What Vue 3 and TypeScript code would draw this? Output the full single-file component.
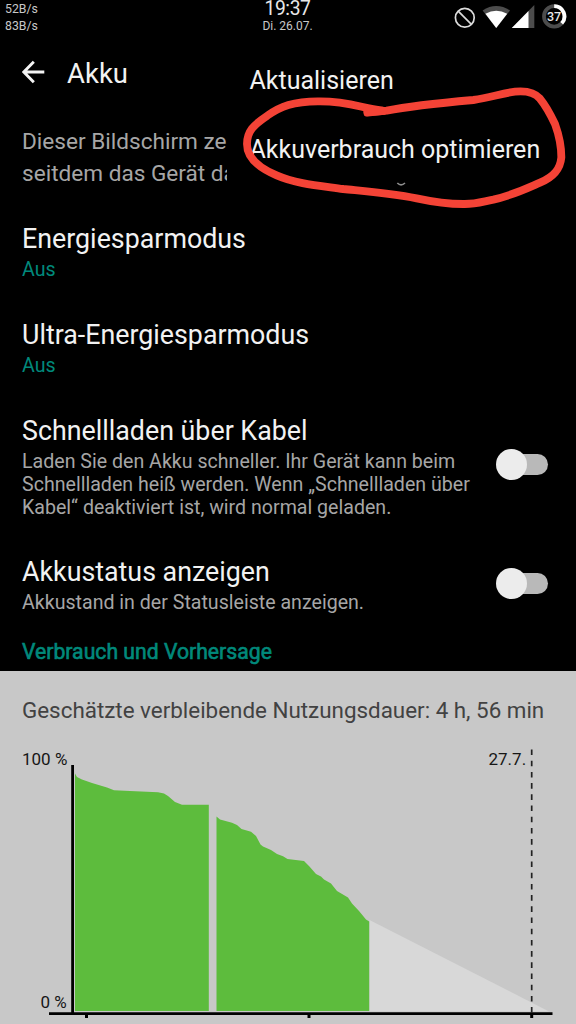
<script setup lang="ts">
interface Pref {
  title: string
  lines: string[]
  accent?: boolean
  toggle?: boolean
  cls: string
}

const prefs: Pref[] = [
  { title: 'Energiesparmodus', lines: ['Aus'], accent: true, cls: 'p-saver' },
  { title: 'Ultra-Energiesparmodus', lines: ['Aus'], accent: true, cls: 'p-ultra' },
  {
    title: 'Schnellladen über Kabel',
    lines: [
      'Laden Sie den Akku schneller. Ihr Gerät kann beim',
      'Schnellladen heiß werden. Wenn „Schnellladen über',
      'Kabel“ deaktiviert ist, wird normal geladen.',
    ],
    toggle: true,
    cls: 'p-fast',
  },
  { title: 'Akkustatus anzeigen', lines: ['Akkustand in der Statusleiste anzeigen.'], toggle: true, cls: 'p-status' },
]
</script>

<template>
  <div class="screen">
    <header class="status">
      <div class="net"><span>52B/s</span><span>83B/s</span></div>
      <div class="clock"><span class="time">19:37</span><span class="date">Di. 26.07.</span></div>
      <svg class="sysicons" width="118" height="36" viewBox="450 0 118 36">
        <g fill="none" stroke="#dcdcdc" stroke-width="1.7">
          <circle cx="464.8" cy="17.8" r="9.4" />
          <path d="M458.2 11.2 471.4 24.4" />
        </g>
        <path d="M482.6 10.400Q496.2 1.800 510 10.400L496.200 28Z" fill="#4c4c4c" />
        <path d="M485.400 13.800Q496.200 7.600 507.200 13.800L496.200 28Z" fill="#fff" />
        <path d="M511.800 28 534.3 5V28Z" fill="#4c4c4c" />
        <path d="M511.800 28 528.500 11V28Z" fill="#fff" />
        <circle cx="554.2" cy="16.4" r="10.2" fill="none" stroke="#4c4c4c" stroke-width="3.8" />
        <path d="M554.200 6.200A10.2 10.2 0 0 1 561.7 23.3" fill="none" stroke="#fff" stroke-width="3.8" />
        <text x="554" y="21" text-anchor="middle" class="pct">37</text>
      </svg>
    </header>

    <div class="toolbar">
      <svg class="back" width="24" height="24" viewBox="0 0 24 24">
        <path d="M22.300 12H2M11.800 1.700 1.800 12 11.800 22.300" fill="none" stroke="#f4f4f4" stroke-width="2.900" />
      </svg>
      <h1>Akku</h1>
    </div>

    <div class="intro"><span>Dieser Bildschirm ze</span><span>seitdem das Gerät da</span></div>

    <section v-for="p in prefs" :key="p.title" class="pref" :class="p.cls">
      <div class="body">
        <h2>{{ p.title }}</h2>
        <p v-for="l in p.lines" :key="l" :class="{ accent: p.accent }">{{ l }}</p>
      </div>
      <div v-if="p.toggle" class="switch"><i class="track" /><i class="thumb" /></div>
    </section>

    <h3 class="category">Verbrauch und Vorhersage</h3>

    <section class="usage">
      <p class="estimate">Geschätzte verbleibende Nutzungsdauer: 4 h, 56 min</p>
      <svg class="chart" width="576" height="286" viewBox="0 738 576 286">
        <path d="M369.5 920 549 1011.500H369.5Z" fill="#d8d8d8" />
        <path
          d="M75 773.5 77 777 82 779.5 92 783 107 787.500 114 790.300 130 791 158 792.2 164 793.5 168 796 175 802 182 804.8H208.800V1011H75Z"
          fill="#5dbc3d"
        />
        <path
          d="M216.500 816.5 220 819.500 232 822.800 237 825 241.500 829 251 831.800 256 836 260.500 844.500 263 846.500 271 850 277 854 283 856.200 287.500 859 304 861 309 866 316 874 321 876.500 324 879.500 331 883.500 337 891 348 897.500 352 903.500 359 911 366 919.500 369.200 921.500V1011H216.500Z"
          fill="#5dbc3d"
        />
        <path d="M72.600 765V1014" stroke="#000" stroke-width="2.8" />
        <path d="M49 1013.600H552.500" stroke="#000" stroke-width="2.8" />
        <path d="M86.500 1013V1018M309 1013V1018M531.700 1013V1018" stroke="#000" stroke-width="3" />
        <path d="M531.700 749.500V1013" stroke="#222" stroke-width="1.7" stroke-dasharray="5.600 5.600" />
        <text x="22" y="765" class="lbl">100 %</text>
        <text x="40.500" y="1008" class="lbl">0 %</text>
        <text x="488.500" y="765" class="lbl">27.7.</text>
      </svg>
    </section>

    <nav class="menu">
      <span class="first">Aktualisieren</span>
      <span>Akkuverbrauch optimieren</span>
    </nav>
    <svg class="marker" width="346" height="170" viewBox="0 0 1038 510">
      <path d="M502 399Q513 410 525 399" fill="none" stroke="#8e8e8e" stroke-width="5" />
      <g fill="none" stroke="#f44336" stroke-linecap="round" stroke-linejoin="round">
        <path
          stroke-width="23.500"
          d="M412 188 455 181C400 176 360 154 270 154C190 153 150 170 112 197C70 225 51 245 51 282C51 325 90 355 140 376C200 402 270 407 340 417C410 424 480 429 560 445C620 458 660 462 700 462C735 463 750 457 790 449C850 435 880 420 930 398C975 379 991 355 994 322C994 295 988 258 975 222C960 190 948 168 930 146C912 125 885 122 855 125C815 130 780 143 730 150C640 158 540 168 470 182Z"
        />
        <path stroke-width="10" fill="#f44336" d="M404 176 408 194 464 189 468 176Z" />
      </g>
    </svg>
  </div>
</template>

<style>
body { margin: 0; background: #000; }
</style>

<style scoped>
.screen {
  position: relative;
  width: 576px;
  height: 1024px;
  overflow: hidden;
  display: flex;
  flex-direction: column;
  background: #000;
  color: #f2f2f2;
  font-family: Roboto, "Liberation Sans", sans-serif;
  white-space: nowrap;
}
h1, h2, h3, p { margin: 0; font-weight: 400; }
span { display: block; }
.status { display: grid; grid-template-columns: 192px 191px 1fr; height: 36px; flex: none; }
.net { padding: 1px 0 0 5px; font-size: 12.300px; line-height: 17px; color: #c8c8c8; }
.clock { text-align: center; }
.time { font-size: 19.300px; line-height: 17px; letter-spacing: -0.4px; color: #e8e8e8; }
.date { font-size: 12px; line-height: 19px; color: #c8c8c8; }
.sysicons { justify-self: end; margin-right: 8px; }
.pct { font-size: 12.500px; font-weight: 500; fill: #e8e8e8; }
.toolbar { height: 90px; flex: none; box-sizing: border-box; padding: 19px 0 0 22px; display: flex; align-items: flex-start; }
.back { margin-top: 5px; }
h1 { margin-left: 21px; font-size: 27.500px; line-height: 37px; }
.intro { width: 205px; height: 96px; margin-left: 22px; flex: none; overflow: hidden; font-size: 22.600px; line-height: 32px; color: #a6a6a6; }
.pref { display: flex; justify-content: space-between; flex: none; padding: 0 27px 0 22px; height: 96px; }
.p-fast { height: 142px; }
.p-status { height: 80px; }
h2 { font-size: 26.800px; line-height: 34px; margin-bottom: 3px; }
.p-status h2 { line-height: 32px; margin-bottom: 4px; }
.pref p { font-size: 19.600px; line-height: 22.800px; color: #a6a6a6; }
.pref p.accent { color: #00897b; }
.switch { position: relative; width: 52px; height: 31px; margin-top: 35px; margin-right: 1px; }
.p-status .switch { margin-top: 12px; }
.track { position: absolute; left: 10px; right: 0; top: 5px; height: 21px; border-radius: 11px; background: #b9b9b9; }
.thumb { position: absolute; left: 0; top: 0; width: 31px; height: 31px; border-radius: 50%; background: #ececec; }
.category { height: 35px; flex: none; padding-left: 22px; font-size: 21.200px; line-height: 32px; font-weight: 400; -webkit-text-stroke: 0.6px #00897b; color: #00897b; }
.usage { flex: 1; background: #c8c8c8; display: flex; flex-direction: column; }
.estimate { padding: 23px 0 0 22px; font-size: 22.400px; line-height: 32px; height: 44px; color: #424242; }
.chart { display: block; margin-top: auto; flex: none; }
.lbl { font-size: 17px; fill: #161616; }
.menu { position: absolute; left: 227px; top: 46px; width: 349px; height: 136px; box-sizing: border-box; padding: 19px 0 0 22.500px; background: #000; font-size: 25px; line-height: 32px; }
.menu .first { margin-bottom: 37px; }
.marker { position: absolute; left: 230px; top: 50px; }
</style>
